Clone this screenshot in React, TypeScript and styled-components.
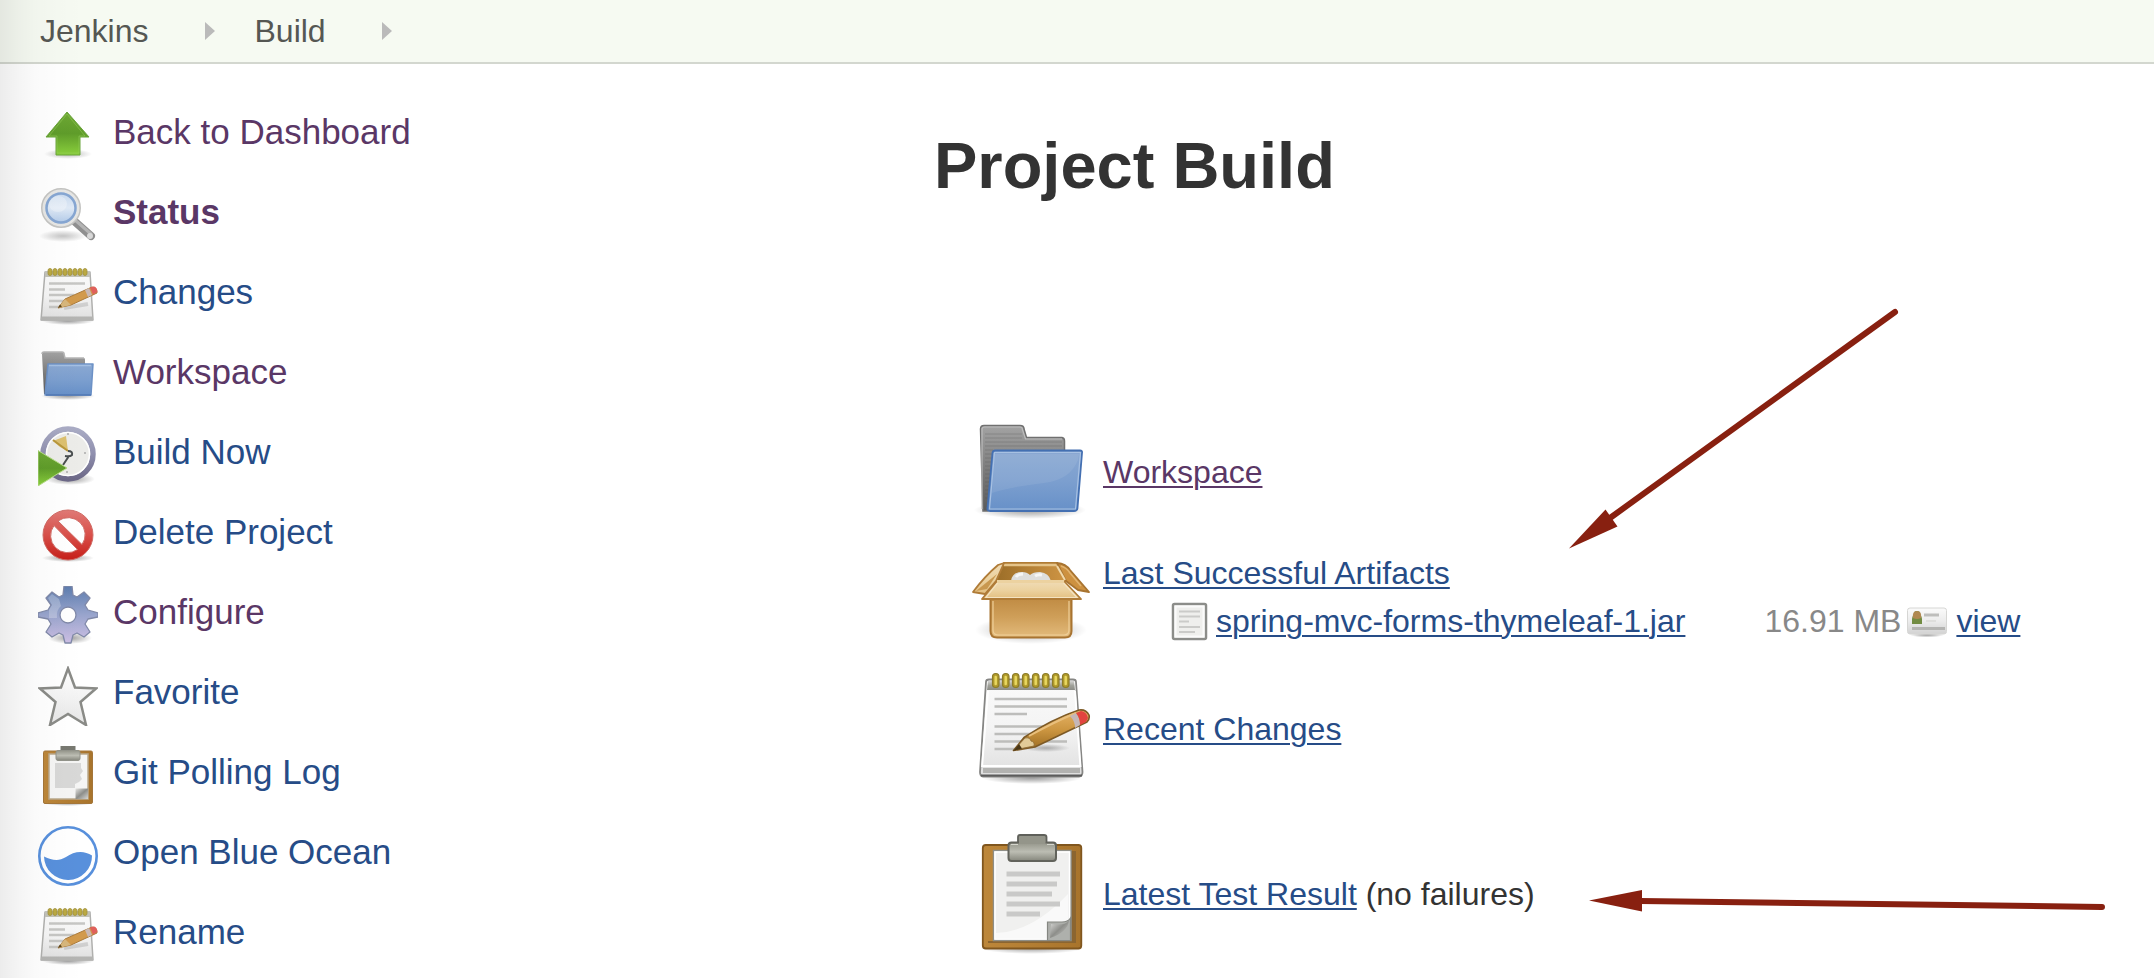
import React from "react";
import styled, { createGlobalStyle } from "styled-components";

const colors = {
  link: "#264c87",
  visited: "#5a3766",
  text: "#333333",
  crumb: "#555753",
  muted: "#888888",
  marker: "#882010",
};

const GlobalStyle = createGlobalStyle`
  * { box-sizing: border-box; }
  body {
    margin: 0;
    background: #ffffff;
    color: ${colors.text};
    font-family: "Liberation Sans", Arial, sans-serif;
    font-size: 32px;
  }
`;

/* ---------- layout ---------- */

const Page = styled.div`
  position: relative;
  min-height: 100vh;
  overflow: hidden;
`;

const EdgeShade = styled.div`
  position: absolute;
  inset: 0 auto 0 0;
  width: 84px;
  pointer-events: none;
  background: linear-gradient(
    to right,
    rgba(0, 0, 0, 0.075),
    rgba(0, 0, 0, 0.04) 24%,
    rgba(0, 0, 0, 0.018) 42%,
    rgba(0, 0, 0, 0.008) 72%,
    rgba(0, 0, 0, 0)
  );
`;

const Breadcrumbs = styled.nav`
  display: flex;
  align-items: center;
  height: 64px;
  padding: 0 40px;
  background: #f6faf2;
  border-bottom: 2px solid #d3d7cf;
`;

const Crumb = styled.a`
  color: ${colors.crumb};
  line-height: 40px;
  text-decoration: none;
`;

const CrumbArrow = styled.span`
  width: 0;
  margin: 0 40px 0 56px;
  border: solid transparent;
  border-width: 9px 0 9px 10px;
  border-left-color: #bababa;
`;

const Columns = styled.div`
  display: flex;
`;

const Sidebar = styled.nav`
  flex: 0 0 800px;
  padding: 42px 38px 0;
`;

const TaskList = styled.ul`
  display: flex;
  flex-direction: column;
  gap: 20px;
  margin: 0;
  padding: 0;
  list-style: none;
`;

const Task = styled.a<{ $visited?: boolean; $current?: boolean }>`
  display: flex;
  gap: 15px;
  height: 60px;
  color: ${(p) => (p.$visited ? colors.visited : colors.link)};
  font-size: 35px;
  font-weight: ${(p) => (p.$current ? "bold" : "normal")};
  line-height: 52px;
  text-decoration: none;
`;

const Main = styled.main`
  position: relative;
  flex: 1;
  min-width: 0;
  padding: 62px 0 0 134px;
`;

const Title = styled.h1`
  margin: 0;
  font-size: 65px;
  line-height: 80px;
`;

const Summary = styled.div`
  display: flex;
  flex-direction: column;
  gap: 5px;
  margin-top: 206px;
  padding-left: 38px;
`;

const SummaryRow = styled.section<{ $spaced?: boolean }>`
  display: flex;
  align-items: center;
  gap: 11px;
  min-height: 120px;
  margin-top: ${(p) => (p.$spaced ? "40px" : "0")};
  line-height: 48px;
`;

const Artifacts = styled(SummaryRow)`
  min-height: 127px;
`;

const ArtifactBody = styled.div`
  padding-bottom: 8px;
`;

const Link = styled.a<{ $visited?: boolean }>`
  color: ${(p) => (p.$visited ? colors.visited : colors.link)};
  text-decoration: underline;
  text-decoration-thickness: 2px;
  text-underline-offset: 3px;
`;

const FileTable = styled.table`
  margin-left: 67px;
  border-collapse: collapse;
  line-height: 48px;
  white-space: nowrap;
`;

const FileCell = styled.td`
  padding: 0;
`;

const SizeCell = styled(FileCell)`
  padding: 0 6px 0 79px;
  color: ${colors.muted};
`;

const FileEntry = styled.span<{ $gap: number }>`
  display: flex;
  align-items: center;
  gap: ${(p) => p.$gap}px;
  height: 48px;
`;

const Icon = styled.svg<{ $size: number }>`
  display: block;
  flex: none;
  width: ${(p) => p.$size}px;
  height: ${(p) => p.$size}px;
`;

const GradientDefs = styled.svg`
  position: absolute;
  width: 0;
  height: 0;
`;

const Markers = styled.svg`
  position: absolute;
  top: 236px;
  left: 760px;
  width: 560px;
  height: 620px;
  pointer-events: none;
`;

/* ---------- icon colours ---------- */

const stops: Record<string, string[]> = {
  green: ["#6ea834", "#5f9c2a", "#8ad03c"],
  lens: ["#c3d6ee", "#e0eaf6", "#a9c4e6"],
  paper: ["#fafafa", "#f4f4f4", "#dedede"],
  band: ["#d4d4d2", "#a0a19a", "#8b8c86"],
  greyTab: ["#a3a3a3", "#7d7d7d", "#5a5a5a"],
  blueFront: ["#8aa8d2", "#7c9fcf", "#6790c8"],
  clock: ["#a9abc4", "#8f8fae", "#6c6887"],
  red: ["#e07a76", "#d9504a", "#c61e18"],
  gear: ["#5c7cae", "#98a4cc", "#cdbfe4"],
  star: ["#ffffff", "#f3f3f3", "#e6e6e6"],
  steel: ["#94958a", "#bcbdb3", "#85867c"],
  cardboard: ["#bf8a42", "#cf9f59", "#e3bb7c"],
  flap: ["#f0dcb6", "#ecd2a0", "#e3bf80"],
  wood: ["#e6b366", "#cb9540", "#9a6a20"],
  card: ["#fbfbfb", "#ececec", "#d2d2d2"],
};

const Gradients = () => (
  <GradientDefs aria-hidden="true">
    <defs>
      {Object.entries(stops).map(([id, [a, b, c]]) => (
        <linearGradient key={id} id={id} x1="0" y1="0" x2="0" y2="1">
          <stop offset="0" stopColor={a} />
          <stop offset="0.5" stopColor={b} />
          <stop offset="1" stopColor={c} />
        </linearGradient>
      ))}
      <linearGradient id="fold" x1="0" y1="0" x2="1" y2="1">
        <stop offset="0" stopColor="#e4e4e2" />
        <stop offset="0.5" stopColor="#8d8e8a" />
        <stop offset="1" stopColor="#d6d6d3" />
      </linearGradient>
      <linearGradient id="board" x1="0" y1="0" x2="1" y2="0">
        <stop offset="0" stopColor="#bd873a" />
        <stop offset="1" stopColor="#a8742c" />
      </linearGradient>
      <linearGradient id="inside" x1="0" y1="0" x2="1" y2="0">
        <stop offset="0" stopColor="#9c6e28" />
        <stop offset="1" stopColor="#cf9544" />
      </linearGradient>
      <radialGradient id="shade">
        <stop offset="0" stopColor="#000" stopOpacity="0.38" />
        <stop offset="0.5" stopColor="#000" stopOpacity="0.2" />
        <stop offset="1" stopColor="#000" stopOpacity="0" />
      </radialGradient>
    </defs>
  </GradientDefs>
);

type IconProps = { size?: number };

const Drawing = ({ size = 60, box = 60, children }: IconProps & { box?: number; children: React.ReactNode }) => (
  <Icon $size={size} viewBox={`0 0 ${box} ${box}`} aria-hidden="true">
    {children}
  </Icon>
);

/* ---------- sidebar icons ---------- */

const UpIcon = () => (
  <Drawing>
    <ellipse cx="30" cy="48" rx="24" ry="5" fill="url(#shade)" opacity="0.7" />
    <path d="M29 6 51 31H42V49H18V31H8Z" fill="url(#green)" stroke="#6ba53c" strokeWidth="1" strokeLinejoin="round" />
    <path d="M29 8 47 30H41V47H19V30H11Z" fill="none" stroke="#9ad05c" strokeOpacity="0.5" />
  </Drawing>
);

const SearchIcon = () => (
  <Drawing>
    <ellipse cx="25" cy="50" rx="24" ry="6" fill="url(#shade)" opacity="0.6" />
    <path d="M35 34 53 50" stroke="#8f8f8f" strokeWidth="8" strokeLinecap="round" />
    <path d="M37 34 53 48" stroke="#b4b4b4" strokeWidth="3" strokeLinecap="round" />
    <circle cx="52" cy="50" r="3" fill="#d8d8d8" />
    <circle cx="23" cy="22" r="18" fill="url(#lens)" stroke="#c4c4c2" strokeWidth="4" />
    <circle cx="23" cy="22" r="17" fill="none" stroke="#e6e6e4" strokeWidth="3" />
    <circle cx="23" cy="22" r="14.500" fill="none" stroke="#86a6d2" strokeWidth="2.500" />
    <ellipse cx="20" cy="18" rx="9" ry="8" fill="#fff" opacity="0.3" />
  </Drawing>
);

const SmallNotepadIcon = () => (
  <Drawing>
    <ellipse cx="30" cy="55" rx="26" ry="4" fill="url(#shade)" />
    <path d="M7 6H52L55 54H3Z" fill="url(#paper)" stroke="#b0b0ae" strokeWidth="1.500" strokeLinejoin="round" />
    <path d="M4 50.500H54.500L55 54.500H3Z" fill="#b4b4b2" />
    <path d="M7 6H52V11H7Z" fill="#c2c2b8" />
    {[0, 1, 2, 3, 4, 5, 6, 7].map((i) => (
      <rect key={i} x={10 + i * 5} y="2.500" width="4" height="7" rx="2" fill="#bba942" stroke="#a2923c" strokeWidth="0.800" />
    ))}
    <path d="M11 17.500H47M11 23.500H27M11 29H36M11 35H36M11 41H24" stroke="#c6c6c4" strokeWidth="2.500" />
    <path d="M26 42 50 38" stroke="#000" strokeOpacity="0.12" strokeWidth="4" />
    <path d="M20 42 27 33 54 21Q59 21 59 27L33 39Z" fill="#d29a4c" stroke="#ab7b3c" strokeWidth="1" strokeLinejoin="round" />
    <path d="M20 42 27 33 33 39Z" fill="#d6b67c" />
    <path d="M20 42 22 38.500 24 40.500Z" fill="#5a4520" />
    <path d="M47 24 51 22 54 29 50 31Z" fill="#c9b8b4" />
    <path d="M52 21.500 56 20.500Q59 21 59.500 26L55 28.500Z" fill="#e0605c" />
  </Drawing>
);

const SmallFolderIcon = () => (
  <Drawing>
    <ellipse cx="30" cy="50" rx="27" ry="4" fill="url(#shade)" />
    <path d="M4 8Q4 6 6 6H24Q26 6 26 8L27 12H46Q47 12 47 14V48H6Z" fill="url(#greyTab)" />
    <path d="M4 8Q4 6 6 6H24Q26 6 26 8L27 12H46" fill="none" stroke="#b5b5b5" strokeWidth="1.500" />
    <path d="M10 18H55L53 49H7Z" fill="url(#blueFront)" stroke="#6c91c6" strokeWidth="1.500" strokeLinejoin="round" />
    <path d="M11 19.500H53" stroke="#a4bfe2" strokeWidth="1.500" />
    <path d="M8 49H53" stroke="#5078b4" strokeWidth="1.500" />
  </Drawing>
);

const ClockIcon = () => (
  <Drawing>
    <ellipse cx="32" cy="53" rx="25" ry="6" fill="url(#shade)" />
    <circle cx="30" cy="28" r="25" fill="#ecece9" stroke="url(#clock)" strokeWidth="5.500" />
    <circle cx="30" cy="28" r="21.500" fill="none" stroke="#fff" strokeWidth="1.500" />
    <path d="M15 15 28 10 30 25 22 21Z" fill="#dcc070" />
    <path d="M15 14 30 25" stroke="#b8973c" strokeWidth="2" />
    <path d="M30 25Q35 25 34 29 32 31 27 30M31 30 25 39" fill="none" stroke="#4a4f50" strokeWidth="2" />
    <path d="M46 27H48M30 7V9M29 45V47" stroke="#aaa" strokeWidth="1.500" />
    <path d="M0 24.500 29 42 0 60Z" fill="url(#green)" stroke="#b6dc88" strokeWidth="1" />
  </Drawing>
);

const ForbiddenIcon = () => (
  <Drawing>
    <ellipse cx="30" cy="52" rx="26" ry="4" fill="url(#shade)" />
    <path
      fillRule="evenodd"
      fill="url(#red)"
      stroke="#d06a64"
      strokeWidth="1"
      d="M30 4A25 25 0 0 1 30 54A25 25 0 0 1 30 4ZM20 15A17 17 0 0 1 44 38.500ZM16 19.500A17 17 0 0 0 39.500 43.500Z"
    />
  </Drawing>
);

const GearIcon = () => (
  <Drawing>
    <ellipse cx="32" cy="52" rx="22" ry="6" fill="url(#shade)" />
    <path
      fillRule="evenodd"
      fill="url(#gear)"
      stroke="#8089a8"
      strokeWidth="1.300"
      strokeLinejoin="round"
      d="M26 0H34L35 9 39 11 46 6 52 12 47 19 50 24 60 27V31L50 33 47 38 52 46 46 51 39 47 35 49 33 57H27L25 49 21 47 14 51 8 46 13 38 10 33 0 31V27L10 24 13 19 8 12 14 6 21 11 25 9ZM30 21A8 8 0 0 0 30 37A8 8 0 0 0 30 21Z"
    />
    <path d="M11 24 14 19 10 12 14 8 21 13 23 20Q18 24 19 32L11 32Z" fill="#fff" opacity="0.25" />
  </Drawing>
);

const StarIcon = () => (
  <Drawing>
    <path
      d="M30 2.500 37 21.500 58 22.500 42.500 36 48 59 30 48 12 59 17.500 36 2 22.500 23 21.500Z"
      fill="url(#star)"
      stroke="#8a8b87"
      strokeWidth="2.500"
    />
  </Drawing>
);

const SmallClipboardIcon = () => (
  <Drawing>
    <ellipse cx="30" cy="57" rx="26" ry="3" fill="url(#shade)" />
    <rect x="5.500" y="5" width="49" height="52.500" rx="1.500" fill="url(#board)" stroke="#a4763a" strokeWidth="1" />
    <rect x="11" y="8" width="39" height="45" fill="#f5f5f4" stroke="#b9a88c" strokeWidth="1.500" />
    <path d="M17 17H43V22L45 25 42 29 44 33 41 36 37 38V42H17Z" fill="#d8d8d7" />
    <path d="M37.500 42.500H50V53H37.500Z" fill="url(#fold)" />
    <path d="M22.500 0H37.500V5H22.500Z" fill="#777870" />
    <rect x="18" y="4.500" width="24" height="10" rx="2" fill="url(#steel)" stroke="#92938a" strokeWidth="1" />
  </Drawing>
);

const OceanIcon = () => (
  <Drawing>
    <circle cx="30" cy="30" r="28.700" fill="#fff" stroke="#5890dc" strokeWidth="2.600" />
    <path d="M6 30.500C14 34 20 36 28 31 36 25 46 24 54 29.500A24 24 0 0 1 6 30.500Z" fill="#5890dc" />
  </Drawing>
);

/* ---------- summary icons ---------- */

const FolderIcon = () => (
  <Drawing size={120} box={120}>
    <ellipse cx="58" cy="98" rx="56" ry="9" fill="url(#shade)" />
    <path d="M8.500 17Q8.500 13.500 12 13.500H48Q52 13.500 52 17L54.500 25.500H90Q92.500 26 92.500 29V40H24L16 99H11Z" fill="url(#greyTab)" stroke="#707070" strokeWidth="1.500" />
    <path d="M10 97 10 17Q10 15 13 15H48Q50.500 15 50.500 18L53.500 27H90" fill="none" stroke="#bcbcbc" strokeWidth="1.200" />
    {[22, 26, 30, 34, 38, 42, 46, 50, 54, 58, 62, 66, 70, 74, 78, 82, 86].map((y) => (
      <path key={y} d={`M13 ${y}H${y < 30 ? 50 : y < 38 ? 90 : 21 - (y - 38) / 10}`} stroke="#4d4d4d" strokeOpacity="0.25" />
    ))}
    <path d="M23 38.500H108Q110.500 38.500 110 41L105.500 96Q105 99 102 99H18Q15 99 15.500 96L20.500 41Q21 38.500 23 38.500Z" fill="url(#blueFront)" stroke="#4470b2" strokeWidth="1.800" />
    <path d="M22.500 40.500H108.500L103.500 97H17.500Z" fill="none" stroke="#a8c1e2" strokeWidth="1.200" />
    <path d="M23 42H107L106 48Q98 68 72 71 38 75 20 81Z" fill="#fff" opacity="0.08" />
  </Drawing>
);

const PackageIcon = () => (
  <Drawing size={120} box={120}>
    <ellipse cx="59" cy="89" rx="56" ry="14" fill="url(#shade)" opacity="0.8" />
    <path d="M18.500 56H99.500V90Q99.500 96.500 93 96.500H25Q18.500 96.500 18.500 90Z" fill="url(#cardboard)" stroke="#a87431" strokeWidth="2" />
    <path d="M21 60V89Q21 94 26 94H92Q97 94 97 89V60" fill="none" stroke="#efcf98" strokeWidth="1.200" />
    <path d="M32 22H85L95 40H24Z" fill="url(#inside)" stroke="#b07c34" strokeWidth="1.800" />
    <path d="M32 24H85" stroke="#e5c489" strokeWidth="2.500" />
    <path d="M39 40Q40 31 50 31 55 31 58 34 61 31 68 31 77 32 79 40Z" fill="#dededc" />
    <path d="M44 36Q46 33 51 33M63 35Q66 33 70 34" stroke="#f6f6f5" strokeWidth="3" fill="none" />
    <path d="M32 22 24 40 13 53 1 51Q13 35 26 24Z" fill="url(#flap)" stroke="#b07c38" strokeWidth="1.800" strokeLinejoin="round" />
    <path d="M4 50 25 33 15 48Z" fill="#c9984f" />
    <path d="M85 22Q94 23 98 29L117 51 106 49 94 40Z" fill="#cd9140" stroke="#a87431" strokeWidth="1.800" strokeLinejoin="round" />
    <path d="M89 25Q95 27 98 32L109 45" fill="none" stroke="#e2b470" strokeWidth="1.500" />
    <path d="M25 40H92L109 58H10Z" fill="url(#flap)" stroke="#b07c38" strokeWidth="1.800" strokeLinejoin="round" />
    <path d="M26 41.500H91L105 56.500H14Z" fill="none" stroke="#f4e3c2" strokeWidth="1.200" />
    <path d="M25 40.500H92" stroke="#ecd2a0" strokeWidth="3" />
    <path d="M85 25 93 39" stroke="#f0d8aa" strokeWidth="2" />
  </Drawing>
);

const NotepadIcon = () => (
  <Drawing size={120} box={120}>
    <ellipse cx="60" cy="109" rx="50" ry="6" fill="url(#shade)" />
    <path d="M17 10.500H101Q104 10.500 104 13L110.500 103Q110.500 107.500 107 107.500H11Q8 107.500 8 103L14 13Q14 10.500 17 10.500Z" fill="url(#paper)" stroke="#868684" strokeWidth="1.800" />
    <path d="M16 12H102L103 21H15Z" fill="url(#band)" />
    <path d="M16 22 10 98M103 22 108.500 98M11 97H108" stroke="#fff" strokeWidth="2" />
    <path d="M11 99H108V104H11Z" fill="#b2b2b0" />
    <path d="M9 106.500H110" stroke="#5c5c5c" strokeWidth="1.800" />
    {[0, 1, 2, 3, 4, 5, 6, 7].map((i) => (
      <g key={i}>
        <rect x={20.5 + i * 10} y="4.500" width="6.500" height="14" rx="3.200" fill="#b09a2c" stroke="#8c7c28" strokeWidth="1.200" />
        <path d={`M${23.7 + i * 10} 8V15`} stroke="#e8d860" strokeWidth="2.500" strokeLinecap="round" />
      </g>
    ))}
    <path d="M22.500 30H95M22.500 37.500H95M22.500 45H55M22.500 57.500H76M22.500 65H66M22.500 72.500H95M22.500 80H50" stroke="#bdbdbb" strokeWidth="2.500" />
    <ellipse cx="74" cy="79" rx="24" ry="4" fill="url(#shade)" opacity="0.7" />
    <path d="M41.500 81.500 52 68.500Q80 50 107 41 114 40 117 46 118 50 115 53L63 78Z" fill="url(#wood)" stroke="#7d5a26" strokeWidth="1.600" strokeLinejoin="round" />
    <path d="M57 67Q82 53 104 44" fill="none" stroke="#e9bf7c" strokeWidth="2" />
    <path d="M42 81 53 69Q58 68 59 72 63 73 62 77Z" fill="#e2cb98" stroke="#8b6a34" strokeWidth="0.800" />
    <path d="M41 82 47 75 50 79.500Z" fill="#4a3717" />
    <path d="M98 47 104 44Q108 49 108 56L103 59Q103 52 98 47Z" fill="#c4b7b8" />
    <path d="M104 44 109 42Q115 43 116 49L114 53 108 56Q108 49 104 44Z" fill="#e2443f" />
  </Drawing>
);

const ClipboardIcon = () => (
  <Drawing size={120} box={120}>
    <ellipse cx="60" cy="114" rx="52" ry="6" fill="url(#shade)" />
    <rect x="10.800" y="11" width="98.500" height="103.500" rx="3" fill="url(#board)" stroke="#80561e" strokeWidth="1.800" />
    <path d="M99 17H104V109H16V107H99Z" fill="#8b6530" />
    <rect x="21.500" y="16.500" width="77.500" height="90" fill="#f0f0ef" stroke="#8f8f88" strokeWidth="1.500" />
    <rect x="23" y="18" width="74.500" height="87" fill="none" stroke="#fff" strokeWidth="1.500" />
    <path d="M24 104V99Q60 98 96 60V88L76 104Z" fill="#fff" opacity="0.6" />
    <path d="M34.500 40H88M34.500 50H85M34.500 60H80M34.500 70H88M34.500 80H68" stroke="#c9c9c8" strokeWidth="5" />
    <path d="M75.500 88H90Q96 88 98.500 84V106.500H75.500Z" fill="#aeb0ac" stroke="#858782" strokeWidth="1.200" />
    <path d="M79 90Q94 92 97 86 96 98 78 104Z" fill="url(#fold)" />
    <path d="M46 9V3Q46 1 48 1H72Q74.500 1 74.500 3V9Z" fill="#94958a" stroke="#5f605a" strokeWidth="1.800" />
    <rect x="36.500" y="8.500" width="47.500" height="18.500" rx="3" fill="url(#steel)" stroke="#62635c" strokeWidth="2" />
    <path d="M47 8.500H73.500" stroke="#94958a" strokeWidth="3" />
    <path d="M39 10.500H46M75 10.500H82" stroke="#d5d6cd" strokeWidth="1.200" />
  </Drawing>
);

const FileIcon = () => (
  <Drawing size={40} box={40}>
    <rect x="3" y="3" width="33" height="35" rx="1.500" fill="#efefed" stroke="#8c8d8a" strokeWidth="2.500" />
    <rect x="5.500" y="5.500" width="28" height="30" fill="none" stroke="#fbfbfb" strokeWidth="2" />
    <path d="M9 10.500H30M9 15.500H30M9 20.500H19M9 26H30M9 31H25" stroke="#cbcbc9" strokeWidth="2" />
  </Drawing>
);

const BadgeIcon = () => (
  <Drawing size={40} box={40}>
    <ellipse cx="20" cy="34" rx="17" ry="2.500" fill="url(#shade)" />
    <rect x="0.500" y="7" width="39" height="26" rx="2.500" fill="url(#card)" stroke="#d6d6d4" strokeWidth="1" />
    <path d="M5 23V18Q5 15 7 14 6 10 10 10 14 10 13 14 15 15 15 18V23Z" fill="#728c42" />
    <path d="M6 17Q5 10 10 10 15 10 14 17 10 19 6 17Z" fill="#b08850" />
    <path d="M17 14H32" stroke="#bebebc" strokeWidth="3" />
    <path d="M19 20H29" stroke="#dededc" strokeWidth="2" />
    <path d="M5 27.500H38" stroke="#b4b4b2" strokeWidth="3" />
  </Drawing>
);

/* ---------- page ---------- */

type TaskItem = { label: string; icon: React.ReactNode; visited?: boolean; current?: boolean };

const tasks: TaskItem[] = [
  { label: "Back to Dashboard", icon: <UpIcon />, visited: true },
  { label: "Status", icon: <SearchIcon />, visited: true, current: true },
  { label: "Changes", icon: <SmallNotepadIcon /> },
  { label: "Workspace", icon: <SmallFolderIcon />, visited: true },
  { label: "Build Now", icon: <ClockIcon /> },
  { label: "Delete Project", icon: <ForbiddenIcon /> },
  { label: "Configure", icon: <GearIcon />, visited: true },
  { label: "Favorite", icon: <StarIcon /> },
  { label: "Git Polling Log", icon: <SmallClipboardIcon /> },
  { label: "Open Blue Ocean", icon: <OceanIcon /> },
  { label: "Rename", icon: <SmallNotepadIcon /> },
];

export default function App() {
  return (
    <Page>
      <GlobalStyle />
      <Gradients />
      <Breadcrumbs aria-label="Breadcrumb">
        <Crumb href="#jenkins">Jenkins</Crumb>
        <CrumbArrow />
        <Crumb href="#build">Build</Crumb>
        <CrumbArrow />
      </Breadcrumbs>
      <Columns>
        <Sidebar aria-label="Project tasks">
          <TaskList>
            {tasks.map((task) => (
              <li key={task.label}>
                <Task href="#task" $visited={task.visited} $current={task.current}>
                  {task.icon}
                  <span>{task.label}</span>
                </Task>
              </li>
            ))}
          </TaskList>
        </Sidebar>
        <Main>
          <Title>Project Build</Title>
          <Summary>
            <SummaryRow>
              <FolderIcon />
              <Link href="#workspace" $visited>Workspace</Link>
            </SummaryRow>
            <Artifacts>
              <PackageIcon />
              <ArtifactBody>
                <Link href="#artifacts">Last Successful Artifacts</Link>
                <FileTable>
                  <tbody>
                    <tr>
                      <FileCell>
                        <FileEntry $gap={6}>
                          <FileIcon />
                          <Link href="#jar">spring-mvc-forms-thymeleaf-1.jar</Link>
                        </FileEntry>
                      </FileCell>
                      <SizeCell>16.91 MB</SizeCell>
                      <FileCell>
                        <FileEntry $gap={9}>
                          <BadgeIcon />
                          <Link href="#view">view</Link>
                        </FileEntry>
                      </FileCell>
                    </tr>
                  </tbody>
                </FileTable>
              </ArtifactBody>
            </Artifacts>
            <SummaryRow>
              <NotepadIcon />
              <Link href="#changes">Recent Changes</Link>
            </SummaryRow>
            <SummaryRow $spaced>
              <ClipboardIcon />
              <span>
                <Link href="#tests">Latest Test Result</Link> (no failures)
              </span>
            </SummaryRow>
          </Summary>
          <Markers viewBox="1560 300 560 620" fill={colors.marker} aria-hidden="true">
            <path d="M1895 312 1610 518" stroke={colors.marker} strokeWidth="6" strokeLinecap="round" />
            <path d="M1569 548.500 1605.500 509.500 1617.500 526.500Z" />
            <path d="M2102 907 1640 901" stroke={colors.marker} strokeWidth="6" strokeLinecap="round" />
            <path d="M1589 900.500 1642 890 1642 911.500Z" />
          </Markers>
        </Main>
      </Columns>
      <EdgeShade />
    </Page>
  );
}
